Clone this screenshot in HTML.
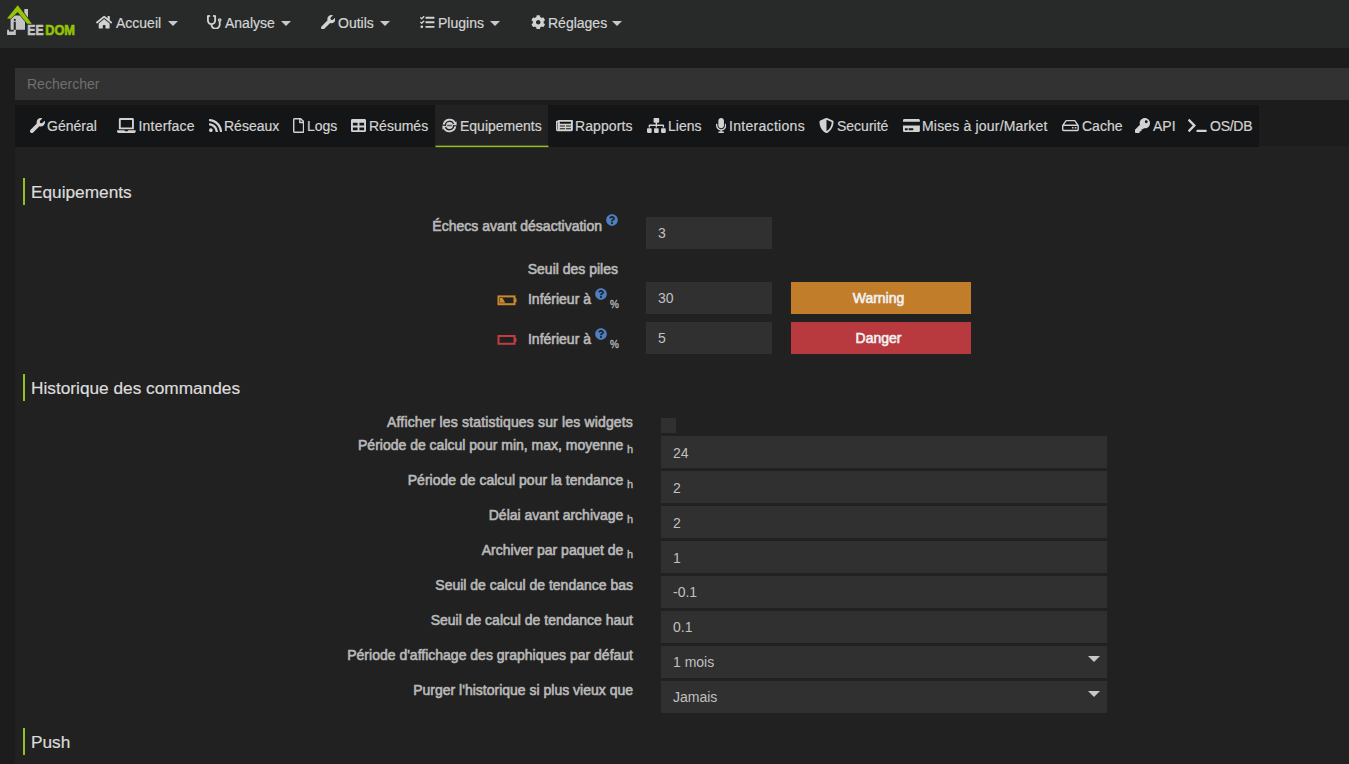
<!DOCTYPE html>
<html><head><meta charset="utf-8">
<style>
*{box-sizing:border-box;margin:0;padding:0}
html,body{width:1349px;height:764px;overflow:hidden;background:#1c1c1c;font-family:"Liberation Sans",sans-serif;color:#c8c8c8}
.abs{position:absolute}
.ic{position:absolute;display:block}
#hdr{position:absolute;left:0;top:0;width:1349px;height:48px;background:#282a2a}
.nav{position:absolute;top:15px;font-size:14px;color:#d4d4d4;-webkit-text-stroke:0.2px #d4d4d4;white-space:nowrap;line-height:17px}
.caret{position:absolute;width:0;height:0;border-left:5px solid transparent;border-right:5px solid transparent;border-top:5px solid #c8c8c8}
#search{position:absolute;left:15px;top:68px;width:1334px;height:32px;background:#323232;color:#6f6f6f;font-size:14px;padding:8px 12px;line-height:16px}
#tabs{position:absolute;left:15px;top:105px;width:1244px;height:42px;background:#141516}
#active{position:absolute;left:435px;top:105px;width:113px;height:42px;background:#222222}
.tab{position:absolute;top:118px;font-size:14px;color:#d2d2d2;-webkit-text-stroke:0.2px #d2d2d2;white-space:nowrap;line-height:17px}
#panel{position:absolute;left:15px;top:146px;width:1334px;height:618px;background:#212121}
.sect{position:absolute;left:23px;border-left:2px solid #94c11f;height:27px;padding-left:6px;padding-top:1px;font-size:17.25px;color:#dcdcdc;-webkit-text-stroke:0.2px #dcdcdc;line-height:27px;white-space:nowrap}
.lbl{position:absolute;font-size:14px;font-weight:bold;color:#b9b9b9;white-space:nowrap;line-height:17px}
.lblr{position:absolute;right:716px;font-size:14px;color:#b9b9b9;-webkit-text-stroke:0.6px #b9b9b9;white-space:nowrap;line-height:17px}
.h{font-size:11px;-webkit-text-stroke:0.4px #b9b9b9;vertical-align:-3px;margin-left:3.5px}
.inp{position:absolute;background:#303030;color:#c0c0c0;font-size:14px;padding:1px 12px 0;line-height:32px;height:32px}
.btn{position:absolute;color:#f2f2f2;font-size:14px;-webkit-text-stroke:0.6px #f2f2f2;text-align:center;line-height:32px;height:32px;width:180px;padding-right:5px}
.q{position:absolute;width:12px;height:12px;border-radius:50%;background:#4a7ec2;color:#212121;font-size:10px;font-weight:bold;text-align:center;line-height:12px}
.pct{position:absolute;font-size:10px;color:#b9b9b9;-webkit-text-stroke:0.3px #b9b9b9;line-height:10px}
.sel:after{content:"";position:absolute;right:7px;top:10px;border-left:6px solid transparent;border-right:6px solid transparent;border-top:6px solid #c8c8c8}
</style></head><body>
<div id="hdr"></div>
<!-- logo -->
<svg class="abs" style="left:0;top:0" width="80" height="40" viewBox="0 0 80 40">
  <rect x="24.3" y="9" width="3.7" height="10" fill="#c4c4c4"/>
  <path d="M10.6 29.8 V18.3 L13.6 15.6 H21.2 L25 20.3 V29.8 Z" fill="#c4c4c4"/>
  <path d="M7 18.5 L17.7 5.2 L31.9 23.7 H27.2 L17.7 11.9 L10.8 18.7 Z" fill="none" stroke="#282a2a" stroke-width="1.2"/><path d="M7 18.5 L17.7 5.2 L31.9 23.7 H27.2 L17.7 11.9 L10.8 18.7 Z" fill="#93c405"/>
  <circle cx="14.8" cy="19.9" r="1.1" fill="#282a2a"/>
  <rect x="13.7" y="21.8" width="2.1" height="9" fill="#282a2a"/>
  <path d="M7.1 29.8 H9 V31.6 H13.7 V29.8 H15.8 V35 H7.1 Z" fill="#c4c4c4"/>
  <text x="27.3" y="34.8" font-family="Liberation Sans" font-weight="bold" font-size="13.8" fill="#c4c4c4" stroke="#c4c4c4" stroke-width="0.6" textLength="16.2" lengthAdjust="spacingAndGlyphs">EE</text>
  <text x="45.2" y="34.8" font-family="Liberation Sans" font-weight="bold" font-size="13.8" fill="#93c405" stroke="#93c405" stroke-width="0.6" textLength="29.8" lengthAdjust="spacingAndGlyphs">DOM</text>
</svg>
<svg class="ic" style="left:96.0px;top:14.8px;width:16.31px;height:14.5px" viewBox="0 0 576 512"><path fill="#d2d2d2" d="M280.37 148.26L96 300.11V464a16 16 0 0 0 16 16l112.06-.29a16 16 0 0 0 15.92-16V368a16 16 0 0 1 16-16h64a16 16 0 0 1 16 16v95.64a16 16 0 0 0 16 16.05L464 480a16 16 0 0 0 16-16V300L295.67 148.26a12.19 12.19 0 0 0-15.3 0zM571.6 251.47L488 182.56V44.05a12 12 0 0 0-12-12h-56a12 12 0 0 0-12 12v72.61L318.47 43a48 48 0 0 0-61 0L4.34 251.47a12 12 0 0 0-1.6 16.9l25.5 31A12 12 0 0 0 45.15 301l235.22-193.74a12.19 12.19 0 0 1 15.3 0L530.9 301a12 12 0 0 0 16.9-1.6l25.5-31a12 12 0 0 0-1.7-16.930z"/></svg>
<svg class="ic" style="left:207.0px;top:14.8px;width:14.50px;height:14.5px" viewBox="0 0 512 512"><path fill="#d2d2d2" d="M447.1 112c-34.2.5-62.3 28.4-63 62.6-.5 24.3 12.5 45.6 32 56.8V344c0 57.3-50.2 104-112 104-60 0-109.2-44.1-111.9-99.2C265 333.8 320 269.2 320 192V36.6c0-11.4-8.1-21.3-19.3-23.5L237.8.5c-13-2.6-25.6 5.8-28.2 18.8L206.4 35c-2.6 13 5.8 25.6 18.8 28.2l30.7 6.1v121.4c0 52.9-42.2 96.7-95.1 97.2-53.4.5-96.900-42.7-96.9-96V69.4l30.7-6.1c13-2.6 21.4-15.2 18.8-28.2l-3.1-15.7C107.7 6.4 95.1-2 82.1.6L19.3 13C8.1 15.3 0 25.1 0 36.6V192c0 77.3 55.1 142 128.1 156.8C130.7 439.2 208.6 512 304 512c97 0 176-75.4 176-168V231.4c19.1-11.1 32-31.7 32-55.4 0-35.7-29.2-64.5-64.9-64zm.9 80c-8.8 0-16-7.200-16-16s7.2-16 16-16 16 7.2 16 16-7.2 16-16 16z"/></svg>
<svg class="ic" style="left:320.5px;top:14.8px;width:14.50px;height:14.5px" viewBox="0 0 512 512"><path fill="#d2d2d2" d="M507.73 109.1c-2.24-9.03-13.54-12.09-20.12-5.51l-74.36 74.36-67.88-11.31-11.31-67.88 74.36-74.36c6.62-6.62 3.43-17.9-5.66-20.16-47.38-11.74-99.55.91-136.58 37.93-39.64 39.64-50.55 97.1-34.05 147.2L18.740 402.76c-24.99 24.99-24.99 65.51 0 90.5 24.99 24.99 65.51 24.99 90.5 0l213.21-213.21c50.12 16.71 107.47 5.68 147.37-34.22 37.07-37.07 49.7-89.32 37.91-136.73z"/></svg>
<svg class="ic" style="left:420.0px;top:14.8px;width:14.50px;height:14.5px" viewBox="0 0 512 512"><path fill="#d2d2d2" d="M139.61 35.5a12 12 0 0 0-17 0L58.93 98.81l-22.7-22.12a12 12 0 0 0-17 0L3.53 92.41a12 12 0 0 0 0 17l47.59 47.4a12.78 12.78 0 0 0 17.610 0l15.59-15.62L156.52 69a12.09 12.09 0 0 0 .09-17zm0 159.19a12 12 0 0 0-17 0l-63.68 63.72-22.7-22.1a12 12 0 0 0-17 0L3.53 252a12 12 0 0 0 0 17L51 316.5a12.77 12.77 0 0 0 17.6 0l15.7-15.69 72.2-72.22a12 12 0 0 0 .09-16.9zM64 368c-26.49 0-48.59 21.5-48.59 48S37.53 464 64 464a48 48 0 0 0 0-96zm432 16H208a16 16 0 0 0-16 16v32a16 16 0 0 0 16 16h288a16 16 0 0 0 16-16v-32a16 16 0 0 0-16-16zm0-320H208a16 16 0 0 0-16 16v32a16 16 0 0 0 16 16h288a16 16 0 0 0 16-16V80a16 16 0 0 0-16-16zm0 160H208a16 16 0 0 0-16 16v32a16 16 0 0 0 16 16h288a16 16 0 0 0 16-16v-32a16 16 0 0 0-16-16z"/></svg>
<svg class="ic" style="left:530.5px;top:14.8px;width:14.50px;height:14.5px" viewBox="0 0 512 512"><path fill="#d2d2d2" d="M487.4 315.7l-42.6-24.6c4.3-23.2 4.3-47 0-70.2l42.6-24.6c4.9-2.8 7.1-8.6 5.5-14-11.1-35.6-30-67.8-54.7-94.6-3.8-4.1-10-5.1-14.8-2.3L380.8 110c-17.9-15.4-38.5-27.3-60.8-35.1V25.8c0-5.6-3.9-10.5-9.4-11.7-36.7-8.2-74.3-7.8-109.2 0-5.5 1.2-9.4 6.1-9.4 11.7V75c-22.2 7.9-42.8 19.8-60.8 35.1L88.7 85.5c-4.9-2.8-11-1.9-14.8 2.3-24.7 26.7-43.6 58.9-54.7 94.6-1.7 5.4.6 11.2 5.5 14L67.3 221c-4.3 23.2-4.3 47 0 70.2l-42.6 24.6c-4.9 2.8-7.1 8.6-5.5 14 11.1 35.6 30 67.8 54.7 94.6 3.8 4.1 10 5.1 14.8 2.3l42.6-24.6c17.9 15.4 38.5 27.3 60.8 35.1v49.2c0 5.6 3.9 10.5 9.4 11.7 36.7 8.2 74.3 7.8 109.2 0 5.5-1.2 9.4-6.1 9.4-11.7v-49.2c22.2-7.9 42.8-19.8 60.8-35.1l42.6 24.6c4.9 2.8 11 1.9 14.8-2.3 24.7-26.7 43.6-58.9 54.7-94.6 1.5-5.5-.7-11.3-5.6-14.1zM256 336c-44.1 0-80-35.9-80-80s35.9-80 80-80 80 35.9 80 80-35.9 80-80 80z"/></svg>
<div class="nav" style="left:116px">Accueil</div>
<div class="nav" style="left:225px">Analyse</div>
<div class="nav" style="left:338px">Outils</div>
<div class="nav" style="left:438px">Plugins</div>
<div class="nav" style="left:548px">Réglages</div>
<div class="caret" style="left:168px;top:21px"></div>
<div class="caret" style="left:281px;top:21px"></div>
<div class="caret" style="left:380px;top:21px"></div>
<div class="caret" style="left:490px;top:21px"></div>
<div class="caret" style="left:612px;top:21px"></div>

<div id="search">Rechercher</div>
<div id="panel"></div>
<div id="tabs"></div>
<div id="active"></div>
<svg class="ic" style="left:435px;top:140px" width="114" height="10"><rect x="0.5" y="5.65" width="113" height="1.5" fill="#94c11f"/></svg>

<svg class="ic" style="left:29.5px;top:118.0px;width:15.00px;height:15px" viewBox="0 0 512 512"><path fill="#d2d2d2" d="M507.73 109.1c-2.24-9.03-13.54-12.09-20.12-5.51l-74.36 74.36-67.88-11.31-11.31-67.88 74.36-74.36c6.62-6.62 3.43-17.9-5.66-20.16-47.38-11.74-99.55.91-136.58 37.93-39.64 39.64-50.55 97.1-34.05 147.2L18.740 402.76c-24.99 24.99-24.99 65.51 0 90.5 24.99 24.99 65.51 24.99 90.5 0l213.21-213.21c50.12 16.71 107.47 5.68 147.37-34.22 37.07-37.07 49.7-89.32 37.91-136.73z"/></svg>
<svg class="ic" style="left:117.0px;top:118.0px;width:18.75px;height:15px" viewBox="0 0 640 512"><path fill="#d2d2d2" d="M624 416H381.54c-.74 19.81-14.71 32-32.74 32H288c-18.69 0-33.02-17.47-32.77-32H16c-8.8 0-16 7.2-16 16v16c0 35.2 28.8 64 64 64h512c35.2 0 64-28.8 64-64v-16c0-8.8-7.2-16-16-16zM576 48c0-26.4-21.6-48-48-48H112C85.6 0 64 21.6 64 48v336h512V48zm-64 272H128V64h384v256z"/></svg>
<svg class="ic" style="left:209.0px;top:118.0px;width:13.12px;height:15px" viewBox="0 0 448 512"><path fill="#d2d2d2" d="M128.081 415.959c0 35.369-28.672 64.041-64.041 64.041S0 451.328 0 415.959s28.672-64.041 64.041-64.041 64.04 28.673 64.04 64.041zm175.66 47.25c-8.354-154.6-132.185-278.587-286.95-286.95C7.656 175.765 0 183.105 0 192.253v48.069c0 8.415 6.49 15.472 14.887 16.018 111.832 7.284 201.473 96.702 208.772 208.772.547 8.397 7.604 14.887 16.018 14.887h48.069c9.149.001 16.489-7.655 15.995-16.79zm144.249.288C439.596 229.677 251.465 40.445 16.503 32.01 7.473 31.686 0 38.981 0 48.016v48.068c0 8.625 6.835 15.645 15.453 15.999 191.179 7.839 344.627 161.316 352.465 352.465.353 8.618 7.373 15.453 15.999 15.453h48.068c9.034-.001 16.329-7.474 16.005-16.504z"/></svg>
<svg class="ic" style="left:293.0px;top:118.0px;width:11.25px;height:15px" viewBox="0 0 384 512"><path fill="#d2d2d2" d="M369.9 97.9L286 14C277 5 264.8-.1 252.1-.1H48C21.5 0 0 21.5 0 48v416c0 26.5 21.5 48 48 48h288c26.5 0 48-21.5 48-48V131.9c0-12.7-5.1-25-14.1-34zM332.1 128H256V51.9l76.1 76.1zM48 464V48h160v104c0 13.3 10.7 24 24 24h104v288H48z"/></svg>
<svg class="ic" style="left:351.0px;top:118.0px;width:15.00px;height:15px" viewBox="0 0 512 512"><path fill="#d2d2d2" d="M464 32H48C21.49 32 0 53.49 0 80v352c0 26.51 21.49 48 48 48h416c26.51 0 48-21.49 48-48V80c0-26.51-21.49-48-48-48zM224 416H64v-96h160v96zm0-160H64v-96h160v96zm224 160H288v-96h160v96zm0-160H288v-96h160v96z"/></svg>
<svg class="ic" style="left:442px;top:117.5px" width="15" height="15" viewBox="0 0 14 14">
  <path d="M1.6 6.2 A5.6 5.6 0 0 1 12.2 4.8" stroke="#d2d2d2" stroke-width="1.8" fill="none"/>
  <path d="M12.4 7.8 A5.6 5.6 0 0 1 1.8 9.2" stroke="#d2d2d2" stroke-width="1.8" fill="none"/>
  <path d="M13.6 3 L13.6 7 L9.8 6.2 Z" fill="#d2d2d2"/>
  <path d="M0.4 11 L0.4 7 L4.2 7.8 Z" fill="#d2d2d2"/>
  <circle cx="7" cy="7" r="3.2" fill="#d2d2d2"/>
  <rect x="4.8" y="6.3" width="4.4" height="1.4" fill="#555"/>
</svg>
<svg class="ic" style="left:556.0px;top:118.0px;width:16.88px;height:15px" viewBox="0 0 576 512"><path fill="#d2d2d2" d="M552 64H88c-13.255 0-24 10.745-24 24v8H24c-13.255 0-24 10.745-24 24v272c0 30.928 25.072 56 56 56h472c26.51 0 48-21.49 48-48V88c0-13.255-10.745-24-24-24zM56 400a8 8 0 0 1-8-8V144h16v248a8 8 0 0 1-8 8zm236-16H140c-6.627 0-12-5.373-12-12v-8c0-6.627 5.373-12 12-12h152c6.627 0 12 5.373 12 12v8c0 6.627-5.373 12-12 12zm208 0H348c-6.627 0-12-5.373-12-12v-8c0-6.627 5.373-12 12-12h152c6.627 0 12 5.373 12 12v8c0 6.627-5.373 12-12 12zm-208-96H140c-6.627 0-12-5.373-12-12v-8c0-6.627 5.373-12 12-12h152c6.627 0 12 5.373 12 12v8c0 6.627-5.373 12-12 12zm208 0H348c-6.627 0-12-5.373-12-12v-8c0-6.627 5.373-12 12-12h152c6.627 0 12 5.373 12 12v8c0 6.627-5.373 12-12 12zm0-96H140c-6.627 0-12-5.373-12-12v-40c0-6.627 5.373-12 12-12h360c6.627 0 12 5.373 12 12v40c0 6.627-5.373 12-12 12z"/></svg>
<svg class="ic" style="left:647.0px;top:118.0px;width:18.75px;height:15px" viewBox="0 0 640 512"><path fill="#d2d2d2" d="M128 352H32c-17.67 0-32 14.33-32 32v96c0 17.67 14.33 32 32 32h96c17.67 0 32-14.33 32-32v-96c0-17.67-14.33-32-32-32zm-24-80h192v48h48v-48h192v48h48v-57.59c0-21.17-17.23-38.41-38.41-38.41H344v-64h40c17.67 0 32-14.33 32-32V32c0-17.67-14.33-32-32-32H256c-17.67 0-32 14.33-32 32v96c0 17.67 14.33 32 32 32h40v64H94.41C73.23 224 56 241.23 56 262.41V320h48v-48zm264 80h-96c-17.67 0-32 14.33-32 32v96c0 17.67 14.33 32 32 32h96c17.67 0 32-14.33 32-32v-96c0-17.67-14.33-32-32-32zm240 0h-96c-17.67 0-32 14.33-32 32v96c0 17.67 14.33 32 32 32h96c17.67 0 32-14.33 32-32v-96c0-17.67-14.33-32-32-32z"/></svg>
<svg class="ic" style="left:716.0px;top:118.0px;width:10.31px;height:15px" viewBox="0 0 352 512"><path fill="#d2d2d2" d="M176 352c53.02 0 96-42.98 96-96V96c0-53.02-42.98-96-96-96S80 42.98 80 96v160c0 53.02 42.98 96 96 96zm160-160h-16c-8.84 0-16 7.16-16 16v48c0 74.8-64.49 134.82-140.79 127.38C96.71 376.89 48 317.11 48 250.3V208c0-8.84-7.16-16-16-16H16c-8.84 0-16 7.16-16 16v40.16c0 89.64 63.97 169.55 152 181.69V464H96c-8.84 0-16 7.16-16 16v16c0 8.84 7.16 16 16 16h160c8.84 0 16-7.16 16-16v-16c0-8.84-7.16-16-16-16h-56v-33.77C285.71 418.47 352 344.9 352 256v-48c0-8.84-7.16-16-16-16z"/></svg>
<svg class="ic" style="left:819.0px;top:118.0px;width:15.00px;height:15px" viewBox="0 0 512 512"><path fill="#d2d2d2" d="M496 128c0 221.282-135.934 344.645-221.539 380.308a48 48 0 0 1-36.923 0C130.495 463.713 16 326.487 16 128a48 48 0 0 1 29.539-44.308l192-80a48 48 0 0 1 36.923 0l192 80A48 48 0 0 1 496 128zM256 446.3l.066.025c93.539-46.582 172.7-156.872 175.934-311.4L256 61.639v384.661z"/></svg>
<svg class="ic" style="left:903.0px;top:118.0px;width:16.88px;height:15px" viewBox="0 0 576 512"><path fill="#d2d2d2" d="M0 432c0 26.5 21.5 48 48 48h480c26.5 0 48-21.5 48-48V256H0v176zm192-68c0-6.6 5.4-12 12-12h136c6.6 0 12 5.4 12 12v40c0 6.6-5.4 12-12 12H204c-6.6 0-12-5.4-12-12v-40zm-128 0c0-6.6 5.4-12 12-12h72c6.6 0 12 5.4 12 12v40c0 6.6-5.4 12-12 12H76c-6.6 0-12-5.4-12-12v-40zM576 80v48H0V80c0-26.5 21.5-48 48-48h480c26.5 0 48 21.5 48 48z"/></svg>
<svg class="ic" style="left:1062.0px;top:118.0px;width:16.88px;height:15px" viewBox="0 0 576 512"><path fill="#d2d2d2" d="M567.403 235.642L462.323 84.589A48 48 0 0 0 422.919 64H153.081a48 48 0 0 0-39.404 20.589L8.597 235.642A48.001 48.001 0 0 0 0 263.054V400c0 26.51 21.49 48 48 48h480c26.51 0 48-21.49 48-48V263.054c0-9.801-3-19.366-8.597-27.412zM153.081 112h269.838l77.913 112H75.168l77.913-112zM528 400H48V272h480v128zm-32-64c0 17.673-14.327 32-32 32s-32-14.327-32-32 14.327-32 32-32 32 14.327 32 32zm-96 0c0 17.673-14.327 32-32 32s-32-14.327-32-32 14.327-32 32-32 32 14.327 32 32z"/></svg>
<svg class="ic" style="left:1135.0px;top:118.0px;width:15.00px;height:15px" viewBox="0 0 512 512"><path fill="#d2d2d2" d="M512 176.001C512 273.203 433.202 352 336 352c-11.22 0-22.19-1.062-32.827-3.069l-24.012 27.014A23.999 23.999 0 0 1 261.223 384H224v40c0 13.255-10.745 24-24 24h-40v40c0 13.255-10.745 24-24 24H24c-13.255 0-24-10.745-24-24v-78.059c0-6.365 2.529-12.47 7.029-16.971l161.802-161.802C163.108 213.814 160 195.271 160 176 160 78.798 238.797.001 335.999 0 433.488-.001 512 78.511 512 176.001zM336 128c0 26.51 21.49 48 48 48s48-21.49 48-48-21.49-48-48-48-48 21.49-48 48z"/></svg>
<svg class="ic" style="left:1188.0px;top:118.0px;width:18.75px;height:15px" viewBox="0 0 640 512"><path fill="#d2d2d2" d="M257.981 272.971L63.638 467.314c-9.373 9.373-24.569 9.373-33.941 0L7.029 444.647c-9.357-9.357-9.375-24.522-.04-33.901L161.011 256 6.99 101.255c-9.335-9.379-9.317-24.544.04-33.901l22.667-22.667c9.373-9.373 24.569-9.373 33.941 0L257.981 239.03c9.373 9.372 9.373 24.568 0 33.941zM640 456v-32c0-13.255-10.745-24-24-24H312c-13.255 0-24 10.745-24 24v32c0 13.255 10.745 24 24 24h304c13.255 0 24-10.745 24-24z"/></svg>

<div class="tab" style="left:47px">Général</div>
<div class="tab" style="left:138.5px;letter-spacing:0.2px">Interface</div>
<div class="tab" style="left:224px">Réseaux</div>
<div class="tab" style="left:307px">Logs</div>
<div class="tab" style="left:369px">Résumés</div>
<div class="tab" style="left:460px">Equipements</div>
<div class="tab" style="left:575px;letter-spacing:0.1px">Rapports</div>
<div class="tab" style="left:668px">Liens</div>
<div class="tab" style="left:729px;letter-spacing:0.3px">Interactions</div>
<div class="tab" style="left:837px">Securité</div>
<div class="tab" style="left:922px;letter-spacing:0.18px">Mises à jour/Market</div>
<div class="tab" style="left:1082px">Cache</div>
<div class="tab" style="left:1153px">API</div>
<div class="tab" style="left:1210px;letter-spacing:-0.25px">OS/DB</div>

<div class="sect" style="top:178px">Equipements</div>
<div class="sect" style="top:374px">Historique des commandes</div>
<div class="sect" style="top:728px">Push</div>

<!-- section 1 -->
<div class="lblr" style="top:218px;right:747px">Échecs avant désactivation</div>
<svg class="ic" style="left:606.0px;top:214.0px;width:12.00px;height:12.0px" viewBox="0 0 512 512"><path fill="#4e7fc0" d="M504 256c0 136.997-111.043 248-248 248S8 392.997 8 256C8 119.083 119.043 8 256 8s248 111.083 248 248zM262.655 90c-54.497 0-89.255 22.957-116.549 63.758-3.536 5.286-2.353 12.415 2.715 16.258l34.699 26.31c5.205 3.947 12.621 3.008 16.665-2.122 17.864-22.658 30.113-35.797 57.303-35.797 20.429 0 45.698 13.148 45.698 32.958 0 14.976-12.363 22.667-32.534 33.976C247.128 238.528 216 254.941 216 296v4c0 6.627 5.373 12 12 12h56c6.627 0 12-5.373 12-12v-1.333c0-28.462 83.186-29.647 83.186-106.667 0-58.002-60.165-102-116.531-102zM256 338c-25.365 0-46 20.635-46 46 0 25.364 20.635 46 46 46s46-20.636 46-46c0-25.365-20.635-46-46-46z"/></svg>
<div class="inp" style="left:646px;top:217px;width:126px;padding-top:0">3</div>

<div class="lblr" style="top:261px;right:731px">Seuil des piles</div>

<svg class="ic" style="left:496px;top:294px" width="24" height="13" viewBox="0 0 24 13"><rect x="2.5" y="2.4" width="16" height="7.8" fill="none" stroke="#c88a2c" stroke-width="2"/><rect x="18.5" y="4.4" width="2" height="3.8" fill="#c88a2c"/><path d="M4 4 H6.6 L9.2 8.8 H4 Z" fill="#c88a2c"/></svg>
<div class="lblr" style="top:291px;right:758px">Inférieur à</div>
<svg class="ic" style="left:594.8px;top:287.5px;width:12.00px;height:12.0px" viewBox="0 0 512 512"><path fill="#4e7fc0" d="M504 256c0 136.997-111.043 248-248 248S8 392.997 8 256C8 119.083 119.043 8 256 8s248 111.083 248 248zM262.655 90c-54.497 0-89.255 22.957-116.549 63.758-3.536 5.286-2.353 12.415 2.715 16.258l34.699 26.31c5.205 3.947 12.621 3.008 16.665-2.122 17.864-22.658 30.113-35.797 57.303-35.797 20.429 0 45.698 13.148 45.698 32.958 0 14.976-12.363 22.667-32.534 33.976C247.128 238.528 216 254.941 216 296v4c0 6.627 5.373 12 12 12h56c6.627 0 12-5.373 12-12v-1.333c0-28.462 83.186-29.647 83.186-106.667 0-58.002-60.165-102-116.531-102zM256 338c-25.365 0-46 20.635-46 46 0 25.364 20.635 46 46 46s46-20.636 46-46c0-25.365-20.635-46-46-46z"/></svg>
<div class="pct" style="left:610px;top:299.5px">%</div>
<div class="inp" style="left:646px;top:282px;width:126px;padding-top:0">30</div>
<div class="btn" style="left:791px;top:282px;background:#c27d2a">Warning</div>

<svg class="ic" style="left:496px;top:334px" width="24" height="13" viewBox="0 0 24 13"><rect x="2.5" y="2" width="16" height="7.8" fill="none" stroke="#c23c42" stroke-width="2"/><rect x="18.5" y="4" width="2" height="3.8" fill="#c23c42"/></svg>
<div class="lblr" style="top:331px;right:758px">Inférieur à</div>
<svg class="ic" style="left:594.8px;top:327.5px;width:12.00px;height:12.0px" viewBox="0 0 512 512"><path fill="#4e7fc0" d="M504 256c0 136.997-111.043 248-248 248S8 392.997 8 256C8 119.083 119.043 8 256 8s248 111.083 248 248zM262.655 90c-54.497 0-89.255 22.957-116.549 63.758-3.536 5.286-2.353 12.415 2.715 16.258l34.699 26.31c5.205 3.947 12.621 3.008 16.665-2.122 17.864-22.658 30.113-35.797 57.303-35.797 20.429 0 45.698 13.148 45.698 32.958 0 14.976-12.363 22.667-32.534 33.976C247.128 238.528 216 254.941 216 296v4c0 6.627 5.373 12 12 12h56c6.627 0 12-5.373 12-12v-1.333c0-28.462 83.186-29.647 83.186-106.667 0-58.002-60.165-102-116.531-102zM256 338c-25.365 0-46 20.635-46 46 0 25.364 20.635 46 46 46s46-20.636 46-46c0-25.365-20.635-46-46-46z"/></svg>
<div class="pct" style="left:610px;top:339.5px">%</div>
<div class="inp" style="left:646px;top:322px;width:126px;padding-top:0">5</div>
<div class="btn" style="left:791px;top:322px;background:#b8393e">Danger</div>

<!-- section 2 -->
<div class="lblr" style="top:414px;letter-spacing:0.16px">Afficher les statistiques sur les widgets</div>
<div class="abs" style="left:661px;top:418px;width:15px;height:15px;background:#303030"></div>

<div class="lblr" style="top:437px">Période de calcul pour min, max, moyenne<span class="h">h</span></div>
<div class="inp" style="left:661px;top:436px;width:446px">24</div>
<div class="lblr" style="top:472px">Période de calcul pour la tendance<span class="h">h</span></div>
<div class="inp" style="left:661px;top:471px;width:446px">2</div>
<div class="lblr" style="top:507px">Délai avant archivage<span class="h">h</span></div>
<div class="inp" style="left:661px;top:506px;width:446px">2</div>
<div class="lblr" style="top:542px">Archiver par paquet de<span class="h">h</span></div>
<div class="inp" style="left:661px;top:541px;width:446px">1</div>
<div class="lblr" style="top:577px">Seuil de calcul de tendance bas</div>
<div class="inp" style="left:661px;top:576px;width:446px;padding-top:0">-0.1</div>
<div class="lblr" style="top:612px">Seuil de calcul de tendance haut</div>
<div class="inp" style="left:661px;top:611px;width:446px;padding-top:0">0.1</div>
<div class="lblr" style="top:647px">Période d'affichage des graphiques par défaut</div>
<div class="inp sel" style="left:661px;top:646px;width:446px;padding-top:0">1 mois</div>
<div class="lblr" style="top:682px">Purger l'historique si plus vieux que</div>
<div class="inp sel" style="left:661px;top:681px;width:446px;padding-top:0">Jamais</div>

</body></html>
